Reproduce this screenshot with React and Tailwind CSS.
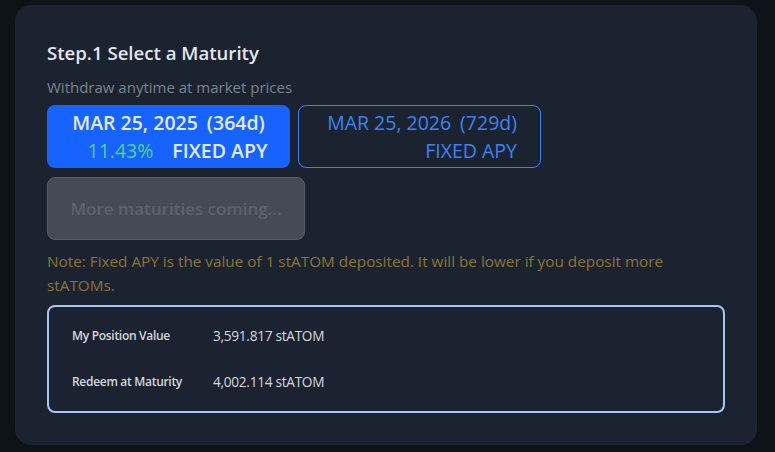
const rows = [
  { label: 'My Position Value', value: '3,591.817 stATOM' },
  { label: 'Redeem at Maturity', value: '4,002.114 stATOM' },
]

export default function App() {
  return (
    <div
      className="h-[452px] w-[775px] bg-[#0e1219] pl-[15px] pr-[18px] pt-[5px] pb-[7px]"
      style={{ fontFamily: '"Open Sans", "Noto Sans", sans-serif' }}
    >
      <div className="h-full rounded-[16px] bg-[#1b2330] px-[32px] pt-[34px]">
        <h2 className="text-[18.6px] leading-[28px] font-semibold text-[#e3e6eb]">Step.1 Select a Maturity</h2>
        <p className="mt-[10px] text-[15px] leading-[20px] text-[#7c838e]">Withdraw anytime at market prices</p>

        <div className="mt-[8px] flex gap-[8px]">
          <button className="flex h-[63px] w-[243px] flex-col items-center justify-center rounded-[8px] bg-[#1763ff] font-semibold text-[#e2ebfa]">
            <div className="flex gap-[9px] text-[19.5px] leading-[28px]">
              <span>MAR 25, 2025</span>
              <span>(364d)</span>
            </div>
            <div className="flex gap-[19px] pl-[18px] text-[19.5px] leading-[28px]">
              <span className="font-normal text-[#4fd48a]">11.43%</span>
              <span>FIXED APY</span>
            </div>
          </button>
          <button className="flex h-[63px] w-[243px] flex-col items-end justify-center rounded-[8px] border border-[#3b82f6] pr-[23px] text-[#3b82f6]">
            <div className="flex gap-[9px] text-[19.5px] leading-[28px]">
              <span>MAR 25, 2026</span>
              <span>(729d)</span>
            </div>
            <div className="text-[19.5px] leading-[28px]">FIXED APY</div>
          </button>
        </div>

        <button className="mt-[9px] flex h-[63px] w-[258px] items-center justify-center rounded-[8px] border border-[#555c67] bg-[#444b56] text-[17px] font-semibold text-[#5b626d]">
          More maturities coming...
        </button>

        <p className="mt-[9px] text-[15.3px] leading-[24px] text-[#8b7532]">
          Note: Fixed APY is the value of 1 stATOM deposited. It will be lower if you deposit more stATOMs.
        </p>

        <div className="mt-[8px] flex h-[108px] w-[678px] flex-col justify-center gap-[25px] rounded-[8px] border-2 border-[#a9c5f5] px-[23px]">
          {rows.map((row) => (
            <div key={row.label} className="flex items-center">
              <span className="w-[141px] text-[12px] font-semibold tracking-[-0.3px] text-[#d4d8de]">{row.label}</span>
              <span className="text-[13.7px] font-medium tracking-[-0.3px] text-[#d4d8de]">{row.value}</span>
            </div>
          ))}
        </div>
      </div>
    </div>
  )
}
